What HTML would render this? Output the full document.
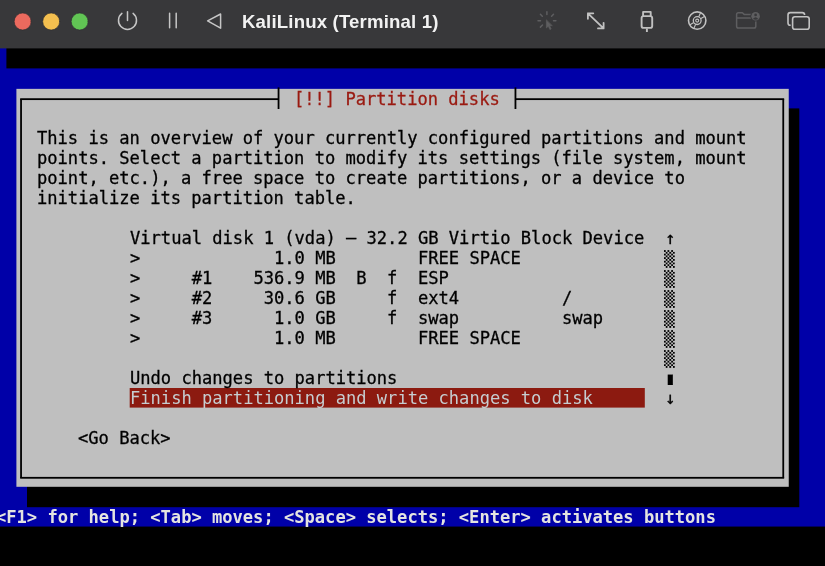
<!DOCTYPE html>
<html><head><meta charset="utf-8"><title>KaliLinux (Terminal 1)</title>
<style>
html,body{margin:0;padding:0;background:#000;}
body{width:825px;height:566px;position:relative;overflow:hidden;font-family:"DejaVu Sans Mono","Liberation Mono",monospace;}
#bg{position:absolute;left:0;top:0;}
.t{will-change:transform;position:absolute;white-space:pre;font-size:17.11px;line-height:19.92px;height:19.92px;color:#000;letter-spacing:-0.016px;-webkit-text-stroke:0.3px currentColor;}
.t.shade{transform-origin:0 0;transform:scale(1.036,0.885);-webkit-text-stroke:0;}
.t.red{color:#9a1a11;}
.t.sel{color:#c6cdd0;-webkit-text-stroke:0;}
.t.help{color:#e4e4e0;font-weight:bold;-webkit-text-stroke:0;}
#bar{position:absolute;left:0;top:0;width:825px;height:48px;}
#bar .title{will-change:transform;position:absolute;left:242.3px;top:0;line-height:44px;height:48px;color:#f2f2f2;font-family:"Liberation Sans",sans-serif;font-weight:bold;font-size:18.6px;letter-spacing:0.17px;white-space:pre;}
#bar svg{position:absolute;left:0;top:0;}
.dot{position:absolute;top:13.1px;width:16.8px;height:16.8px;border-radius:50%;}
</style></head><body>
<svg id="bg" width="825" height="566" viewBox="0 0 825 566">
<rect x="0.00" y="48.00" width="825.00" height="478.75" fill="#0000a8"/>
<rect x="6.40" y="48.00" width="825.00" height="20.40" fill="#000"/>
<rect x="0.00" y="526.75" width="825.00" height="39.25" fill="#000"/>
<rect x="0.00" y="0.00" width="825.00" height="48.40" fill="#38383a"/>
<rect x="27.00" y="108.40" width="772.30" height="398.80" fill="#000"/>
<rect x="16.40" y="88.85" width="772.35" height="397.95" fill="#bfbfbf"/>
<rect x="129.70" y="388.00" width="515.10" height="19.60" fill="#8c1a10"/>
<rect x="20.15" y="98.25" width="258.40" height="1.80" fill="#000"/>
<rect x="515.45" y="98.25" width="268.70" height="1.80" fill="#000"/>
<rect x="20.15" y="476.90" width="764.00" height="1.80" fill="#000"/>
<rect x="20.15" y="99.15" width="1.80" height="378.65" fill="#000"/>
<rect x="782.35" y="99.15" width="1.80" height="378.65" fill="#000"/>
<rect x="277.65" y="87.40" width="1.80" height="21.60" fill="#000"/>
<rect x="514.55" y="87.40" width="1.80" height="21.60" fill="#000"/>
</svg>
<div class="t red" style="left:294.22px;top:89.54px">[!!] Partition disks</div>
<div class="t " style="left:37.10px;top:129.38px">This is an overview of your currently configured partitions and mount</div>
<div class="t " style="left:37.10px;top:149.30px">points. Select a partition to modify its settings (file system, mount</div>
<div class="t " style="left:37.10px;top:169.22px">point, etc.), a free space to create partitions, or a device to</div>
<div class="t " style="left:37.10px;top:189.14px">initialize its partition table.</div>
<div class="t " style="left:129.67px;top:228.98px">Virtual disk 1 (vda) – 32.2 GB Virtio Block Device</div>
<div class="t " style="left:129.67px;top:248.90px">&gt;             1.0 MB        FREE SPACE</div>
<div class="t " style="left:129.67px;top:268.82px">&gt;     #1    536.9 MB  B  f  ESP</div>
<div class="t " style="left:129.67px;top:288.74px">&gt;     #2     30.6 GB     f  ext4          /</div>
<div class="t " style="left:129.67px;top:308.66px">&gt;     #3      1.0 GB     f  swap          swap</div>
<div class="t " style="left:129.67px;top:328.58px">&gt;             1.0 MB        FREE SPACE</div>
<div class="t " style="left:129.67px;top:368.97px">Undo changes to partitions</div>
<div class="t sel" style="left:129.67px;top:388.89px">Finish partitioning and write changes to disk</div>
<div class="t " style="left:78.24px;top:428.73px">&lt;Go Back&gt;</div>
<div class="t help" style="left:-4.44px;top:507.86px">&lt;F1&gt; for help; &lt;Tab&gt; moves; &lt;Space&gt; selects; &lt;Enter&gt; activates buttons</div>
<div class="t" style="left:664.60px;top:228.98px">↑</div>
<div class="t shade" style="left:664px;top:251.00px">▒</div>
<div class="t shade" style="left:664px;top:270.93px">▒</div>
<div class="t shade" style="left:664px;top:290.85px">▒</div>
<div class="t shade" style="left:664px;top:310.76px">▒</div>
<div class="t shade" style="left:664px;top:330.69px">▒</div>
<div class="t shade" style="left:664px;top:350.61px">▒</div>
<div class="t" style="left:664.60px;top:368.97px">▮</div>
<div class="t" style="left:664.60px;top:388.89px">↓</div>
<div id="bar">
<div class="title">KaliLinux (Terminal 1)</div>
<svg width="825" height="48" viewBox="0 0 825 48" fill="none" stroke-linecap="round" stroke-linejoin="round">
<g stroke="#2e2e30" stroke-width="0.6">
<circle cx="22.7" cy="21.5" r="8.5" fill="#ec6a5e"/>
<circle cx="51.2" cy="21.5" r="8.5" fill="#f4bf4f"/>
<circle cx="79.7" cy="21.5" r="8.5" fill="#61c554"/>
</g>
<g stroke="#c6c6c6" stroke-width="1.5">
<!-- power -->
<path d="M121.9 13.4 A9 9 0 1 0 133.1 13.4"/>
<path d="M127.5 11.7 V20.5"/>
<!-- pause -->
<path d="M169.6 13.2 V27.8 M176.2 13.2 V27.8"/>
<!-- back triangle -->
<path d="M207.6 20.9 L220.6 14 V28.2 Z"/>
</g>
<!-- capture cursor (dim) -->
<g stroke="#5e5e60" stroke-width="1.5">
<path d="M546.9 11.7 V14.4 M538 20.7 H540.5 M553.5 20.7 H555.9 M540.4 14.3 L542.3 16.2 M553.5 14.3 L551.6 16.2 M540.4 27.1 L542.5 25"/>
<path d="M546.4 20.2 V28 L548.3 26.2 L549.9 29.6 L551.2 29 L549.7 25.7 H552 Z" fill="#5e5e60" stroke-width="0.6"/>
</g>
<!-- resize arrows -->
<g stroke="#c2c2c2" stroke-width="1.8">
<path d="M587.9 13.3 L603.6 28.4 M587.9 18.8 V13.3 H593.3 M603.6 22.8 V28.4 H598"/>
</g>
<!-- usb -->
<g stroke="#c0c0c0" stroke-width="1.9">
<rect x="641.6" y="16.1" width="10.6" height="11.8" rx="2"/>
<path d="M643.1 16 V11.9 H650.7 V16 M646.9 28.4 V32" stroke-linecap="butt"/>
</g>
<!-- disc -->
<g stroke="#c2c2c2" stroke-width="1.6">
<circle cx="697.2" cy="20.6" r="8.7"/>
<circle cx="697.2" cy="20.6" r="3.9" stroke-width="1.3"/>
<circle cx="697.2" cy="20.6" r="1.5" stroke-width="1.1"/>
<path d="M701.0 18.4 L704.4 16.45 M698.9 16.55 L700.45 12.96 M693.4 22.8 L690.0 24.75 M695.5 24.65 L693.95 28.24" stroke-width="1.1"/>
</g>
<!-- shared folder (dim) -->
<g stroke="#5e5e60" stroke-width="1.5">
<path d="M752 14.6 H744.4 L742.4 12.7 H738.4 Q736.6 12.7 736.6 14.5 V26.3 Q736.6 28.1 738.4 28.1 H754 Q755.8 28.1 755.8 26.3 V20"/>
<path d="M736.6 18 H752"/>
</g>
<circle cx="755.6" cy="16.2" r="5.3" fill="#38383a"/>
<circle cx="755.6" cy="16.2" r="4.3" fill="#5e5e60"/>
<circle cx="755.6" cy="14.9" r="1.35" fill="#38383a"/>
<path d="M752.9 18.9 Q755.6 15.6 758.3 18.9 Q755.6 20.5 752.9 18.9 Z" fill="#38383a"/>
<!-- windows -->
<g stroke="#c2c2c2" stroke-width="1.6">
<rect x="788" y="12.6" width="16.6" height="12.6" rx="2.3"/>
<rect x="792.6" y="16.8" width="16.6" height="12.4" rx="2.3" fill="#38383a" stroke="#38383a" stroke-width="3.8"/>
<rect x="792.6" y="16.8" width="16.6" height="12.4" rx="2.3"/>
</g>
</svg>
</div>

</body></html>
